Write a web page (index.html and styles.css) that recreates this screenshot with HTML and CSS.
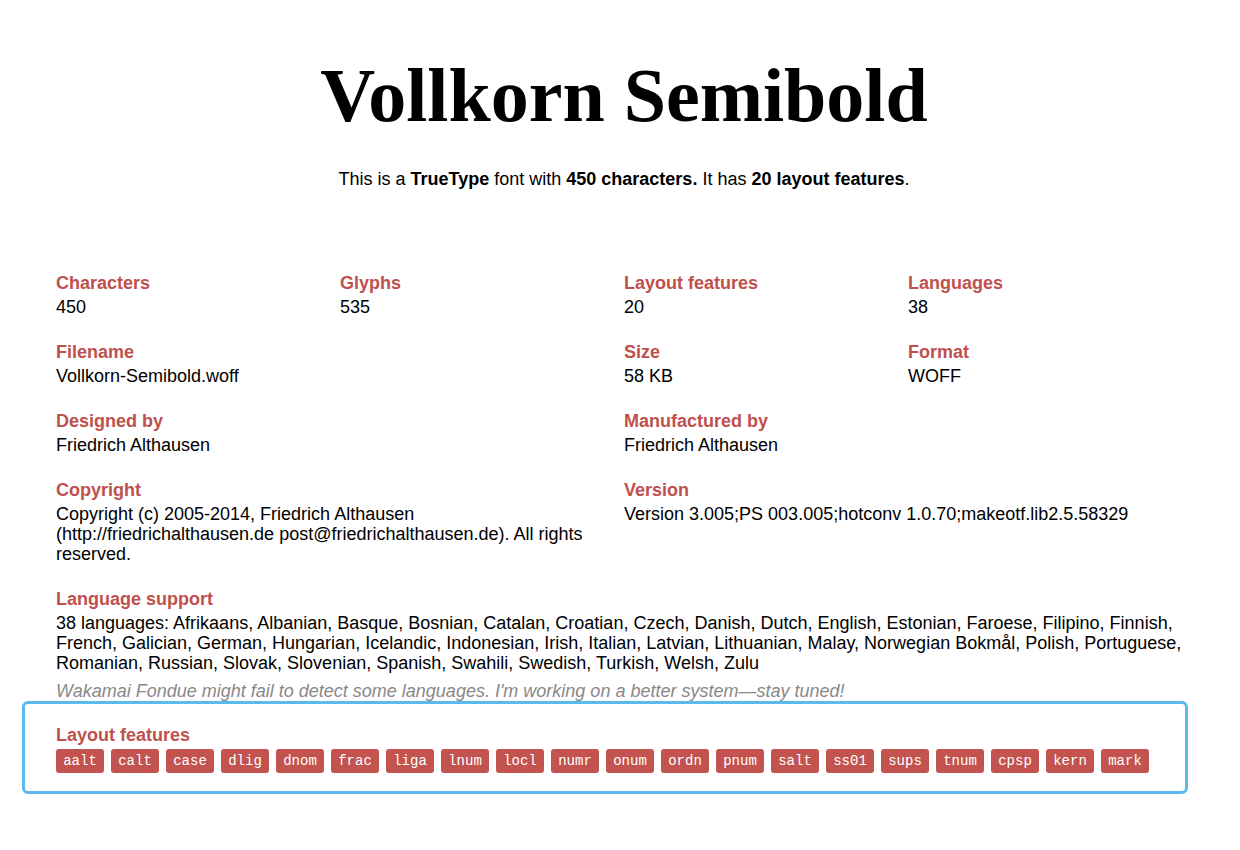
FILE: index.html
```html
<!DOCTYPE html>
<html lang="en">

<head>
    <meta charset="UTF-8">
    <meta name="viewport" content="width=device-width, initial-scale=1.0">
    <title>Vollkorn Semibold - Wakamai Fondue</title>

    <link rel="stylesheet" href="styles.css">
</head>

<body>
    <header class="intro">
        <h1 class="font-name">Vollkorn Semibold</h1>
        <p class="summary">This is a <strong>TrueType</strong> font with <strong>450 characters.</strong> It has <strong>20 layout features</strong>.</p>
    </header>

    <section class="details">
        <div class="item">
            <h3 class="label">Characters</h3>
            <p class="value">450</p>
        </div>
        <div class="item">
            <h3 class="label">Glyphs</h3>
            <p class="value">535</p>
        </div>
        <div class="item">
            <h3 class="label">Layout features</h3>
            <p class="value">20</p>
        </div>
        <div class="item">
            <h3 class="label">Languages</h3>
            <p class="value">38</p>
        </div>

        <div class="item wide">
            <h3 class="label">Filename</h3>
            <p class="value">Vollkorn-Semibold.woff</p>
        </div>
        <div class="item">
            <h3 class="label">Size</h3>
            <p class="value">58 KB</p>
        </div>
        <div class="item">
            <h3 class="label">Format</h3>
            <p class="value">WOFF</p>
        </div>

        <div class="item wide">
            <h3 class="label">Designed by</h3>
            <p class="value">Friedrich Althausen</p>
        </div>
        <div class="item wide">
            <h3 class="label">Manufactured by</h3>
            <p class="value">Friedrich Althausen</p>
        </div>

        <div class="item wide">
            <h3 class="label">Copyright</h3>
            <p class="value">Copyright (c) 2005-2014, Friedrich Althausen (http://friedrichalthausen.de post@friedrichalthausen.de). All rights reserved.</p>
        </div>
        <div class="item wide">
            <h3 class="label">Version</h3>
            <p class="value">Version 3.005;PS 003.005;hotconv 1.0.70;makeotf.lib2.5.58329</p>
        </div>

        <div class="item full">
            <h3 class="label">Language support</h3>
            <p class="value">38 languages: Afrikaans, Albanian, Basque, Bosnian, Catalan, Croatian, Czech, Danish, Dutch, English, Estonian, Faroese, Filipino, Finnish, French, Galician, German, Hungarian, Icelandic, Indonesian, Irish, Italian, Latvian, Lithuanian, Malay, Norwegian Bokmål, Polish, Portuguese, Romanian, Russian, Slovak, Slovenian, Spanish, Swahili, Swedish, Turkish, Welsh, Zulu</p>
            <p class="note">Wakamai Fondue might fail to detect some languages. I'm working on a better system—stay tuned!</p>
        </div>
    </section>

    <section class="features">
        <h3 class="label">Layout features</h3>
        <ul class="feature-list">
            <li>aalt</li>
            <li>calt</li>
            <li>case</li>
            <li>dlig</li>
            <li>dnom</li>
            <li>frac</li>
            <li>liga</li>
            <li>lnum</li>
            <li>locl</li>
            <li>numr</li>
            <li>onum</li>
            <li>ordn</li>
            <li>pnum</li>
            <li>salt</li>
            <li>ss01</li>
            <li>sups</li>
            <li>tnum</li>
            <li>cpsp</li>
            <li>kern</li>
            <li>mark</li>
        </ul>
    </section>
</body>

</html>
```

FILE: styles.css
```css
body {
  margin: 0;
  font-family: "Liberation Sans", Arial, sans-serif;
  font-size: 18px;
  line-height: 20px;
  color: #000;
  background: #fff;
}

.intro {
  margin-left: 8px;
  text-align: center;
}

.font-name {
  margin: 58px 0 0;
  font-family: "Liberation Serif", "Times New Roman", serif;
  font-size: 76px;
  line-height: 75px;
  font-weight: bold;
}

.summary {
  margin: 36px 0 0;
}

.details {
  display: grid;
  grid-template-columns: repeat(4, 284px);
  row-gap: 24px;
  margin: 83px 0 0 56px;
}

.item {
  padding-right: 20px;
}

.wide {
  grid-column: span 2;
}

.full {
  grid-column: span 4;
  padding-right: 0;
}

.label {
  margin: 0 0 2px;
  font-size: 18px;
  line-height: 23px;
  font-weight: bold;
  color: #c0504d;
}

.value {
  margin: 0;
}

.note {
  margin: 8px 0 0;
  font-style: italic;
  color: #888;
}

.features {
  margin: 0 0 0 22px;
  width: 1166px;
  padding: 20px 0 18px 31px;
  border: 3px solid #5bbaec;
  border-radius: 6px;
  box-sizing: border-box;
}

.feature-list {
  display: flex;
  gap: 7px;
  margin: 0;
  padding: 0;
  list-style: none;
}

.feature-list li {
  width: 48px;
  height: 24px;
  line-height: 24px;
  text-align: center;
  border-radius: 3px;
  background: #c2534f;
  color: #fff;
  font-family: "Liberation Mono", "Courier New", monospace;
  font-size: 14px;
}
```
